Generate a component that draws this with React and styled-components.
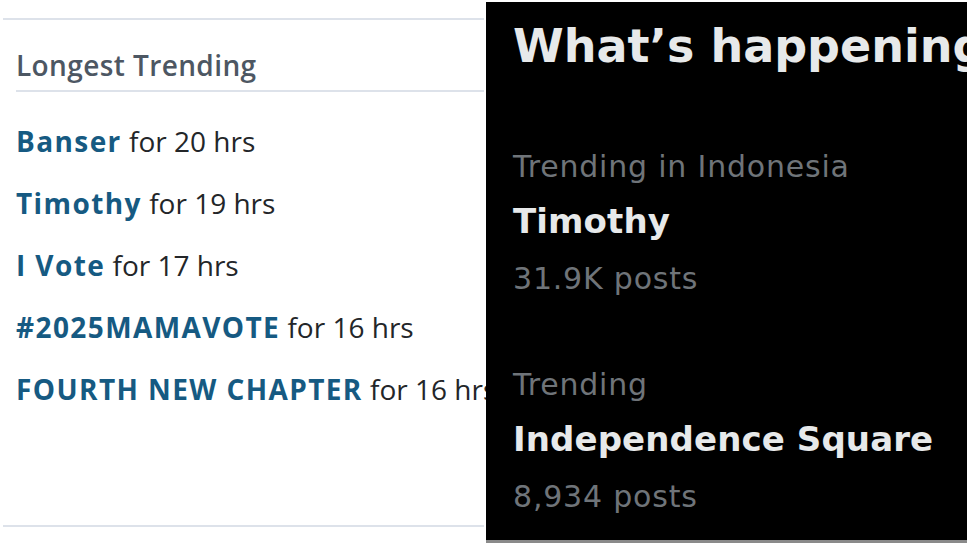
import styled, { createGlobalStyle } from 'styled-components';

const GlobalStyle = createGlobalStyle`
  html, body {
    margin: 0;
    padding: 0;
    background: #ffffff;
  }
`;

const longest = [
  { name: 'Banser', hrs: 20 },
  { name: 'Timothy', hrs: 19 },
  { name: 'I Vote', hrs: 17 },
  { name: '#2025MAMAVOTE', hrs: 16 },
  { name: 'FOURTH NEW CHAPTER', hrs: 16 },
];

const trends = [
  { category: 'Trending in Indonesia', name: 'Timothy', posts: '31.9K posts' },
  { category: 'Trending', name: 'Independence Square', posts: '8,934 posts' },
];

const Page = styled.div`
  display: flex;
  width: 970px;
  height: 546px;
  overflow: hidden;
`;

const LeftPanel = styled.section`
  width: 486px;
  flex-shrink: 0;
  display: flex;
  flex-direction: column;
  padding: 18px 2px 0 3px;
  box-sizing: border-box;
  overflow: hidden;
  font-family: 'Open Sans', 'Liberation Sans', sans-serif;
`;

const Rule = styled.div`
  height: 2px;
  background: #dde2ea;
  margin-left: ${(p) => p.$inset || 0}px;
`;

const Heading = styled.h3`
  margin: 0;
  padding: 20px 0 0 13px;
  height: 70px;
  box-sizing: border-box;
  display: flex;
  align-items: center;
  font-size: 28px;
  font-weight: 600;
  color: #4d5763;
  letter-spacing: 0.4px;
`;

const List = styled.ul`
  list-style: none;
  margin: 0;
  padding: 18px 0 0 13px;
  height: 433px;
  box-sizing: border-box;
`;

const Item = styled.li`
  height: 62px;
  line-height: 62px;
  font-size: 28px;
  color: #232629;
  white-space: nowrap;
`;

const Tag = styled.a`
  color: #165a82;
  font-weight: 700;
  text-decoration: none;
  letter-spacing: 1.4px;
`;

const RightPanel = styled.section`
  width: 481px;
  height: 541px;
  margin-top: 2px;
  flex-shrink: 0;
  background: #000000;
  border-bottom: 3px solid #8a8a8a;
  padding: 14px 0 0 27px;
  box-sizing: border-box;
  overflow: hidden;
  font-family: 'DejaVu Sans', Inter, sans-serif;
  display: flex;
  flex-direction: column;
  gap: 66px;
`;

const Title = styled.h2`
  margin: 0;
  height: 60px;
  line-height: 60px;
  font-size: 46px;
  font-weight: 700;
  color: #e7e9ea;
  white-space: nowrap;
`;

const Trends = styled.div`
  display: flex;
  flex-direction: column;
  gap: 52px;
`;

const Trend = styled.div`
  display: flex;
  flex-direction: column;
`;

const Line = styled.div`
  height: ${(p) => p.$h}px;
  line-height: ${(p) => p.$h}px;
  font-size: ${(p) => p.$size}px;
  font-weight: ${(p) => (p.$bold ? 700 : 400)};
  color: ${(p) => (p.$bold ? '#e7e9ea' : '#6f7479')};
  letter-spacing: ${(p) => (p.$bold ? 0.1 : 0.8)}px;
  white-space: nowrap;
`;

export default function App() {
  return (
    <Page>
      <GlobalStyle />
      <LeftPanel>
        <Rule />
        <Heading>Longest Trending</Heading>
        <Rule $inset={13} />
        <List>
          {longest.map((t) => (
            <Item key={t.name}>
              <Tag href="#">{t.name}</Tag> for {t.hrs} hrs
            </Item>
          ))}
        </List>
        <Rule />
      </LeftPanel>
      <RightPanel>
        <Title>What’s happening</Title>
        <Trends>
          {trends.map((t) => (
            <Trend key={t.name}>
              <Line $h={50} $size={30}>{t.category}</Line>
              <Line $h={58} $size={34} $bold>{t.name}</Line>
              <Line $h={58} $size={30}>{t.posts}</Line>
            </Trend>
          ))}
        </Trends>
      </RightPanel>
    </Page>
  );
}
